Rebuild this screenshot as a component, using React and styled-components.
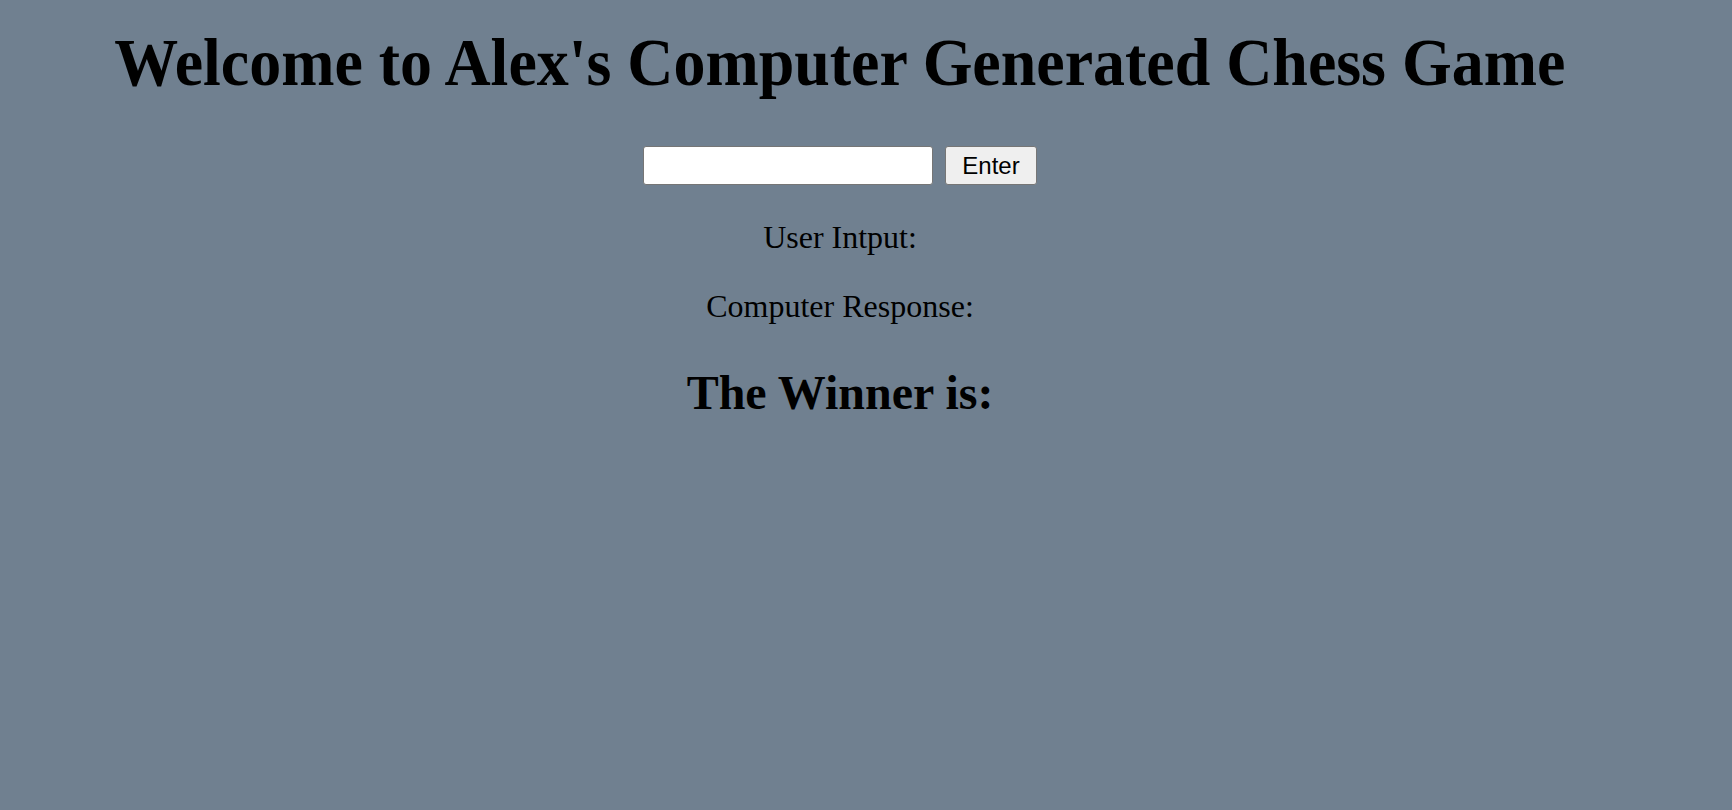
import React, { useState } from "react";
import styled, { createGlobalStyle } from "styled-components";

const GlobalStyle = createGlobalStyle`
  html, body {
    margin: 0;
    padding: 0;
    background-color: slategray;
    min-height: 100%;
  }
  body {
    font-family: "Liberation Serif", "Times New Roman", serif;
    color: #000;
  }
`;

const Page = styled.div`
  width: 1680px;
  min-height: 810px;
  text-align: center;
`;

const Title = styled.h1`
  font-size: 68px;
  font-weight: bold;
  margin: 25px 0 0;
  line-height: 75px;
`;

// the original face is narrower than Liberation Serif Bold
const TitleText = styled.span`
  display: inline-block;
  transform: scaleX(0.94);
`;

const EntryRow = styled.form`
  display: flex;
  justify-content: center;
  align-items: center;
  gap: 12px;
  margin-top: 46px;
`;

const MoveInput = styled.input`
  width: 290px;
  height: 39px;
  box-sizing: border-box;
  border: 1px solid #767676;
  border-radius: 3px;
  background: #fff;
  font-size: 20px;
  padding: 0 6px;
`;

const EnterButton = styled.button`
  width: 92px;
  height: 39px;
  box-sizing: border-box;
  border: 1px solid #767676;
  border-radius: 3px;
  background: #efefef;
  font-family: "Liberation Sans", Arial, sans-serif;
  font-size: 24px;
  color: #000;
  padding: 0;
`;

const Line = styled.p`
  font-size: 32px;
  margin: ${(p) => (p.$first ? "35px" : "34px")} 0 34px;
  line-height: 35px;
`;

const Winner = styled.h2`
  font-size: 48px;
  font-weight: bold;
  margin: 42px 0 0;
  line-height: 53px;
`;

export default function App() {
  const [move, setMove] = useState("");
  const [userMove, setUserMove] = useState("");

  const handleSubmit = (e) => {
    e.preventDefault();
    setUserMove(move);
    setMove("");
  };

  return (
    <>
      <GlobalStyle />
      <Page>
        <Title>
          <TitleText>Welcome to Alex's Computer Generated Chess Game</TitleText>
        </Title>
        <EntryRow onSubmit={handleSubmit}>
          <MoveInput value={move} onChange={(e) => setMove(e.target.value)} />
          <EnterButton type="submit">Enter</EnterButton>
        </EntryRow>
        <Line $first>User Intput: {userMove}</Line>
        <Line>Computer Response:</Line>
        <Winner>The Winner is:</Winner>
      </Page>
    </>
  );
}
